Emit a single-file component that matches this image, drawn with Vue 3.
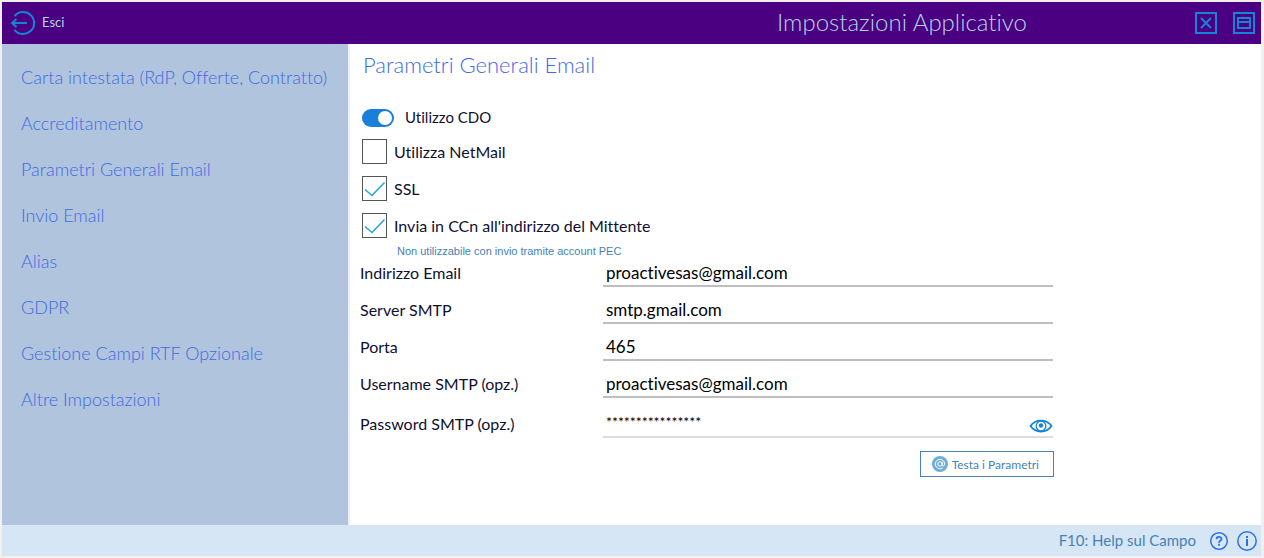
<script setup>
import { ref, reactive } from 'vue'

const menu = [
  'Carta intestata (RdP, Offerte, Contratto)',
  'Accreditamento',
  'Parametri Generali Email',
  'Invio Email',
  'Alias',
  'GDPR',
  'Gestione Campi RTF Opzionale',
  'Altre Impostazioni',
]

const useCdo = ref(true)

const options = reactive([
  { id: 'netmail', label: 'Utilizza NetMail', checked: false },
  { id: 'ssl', label: 'SSL', checked: true },
  { id: 'ccn', label: "Invia in CCn all'indirizzo del Mittente", checked: true },
])

const fields = reactive([
  { id: 'email', label: 'Indirizzo Email', value: 'proactivesas@gmail.com' },
  { id: 'server', label: 'Server SMTP', value: 'smtp.gmail.com' },
  { id: 'port', label: 'Porta', value: '465' },
  { id: 'username', label: 'Username SMTP (opz.)', value: 'proactivesas@gmail.com' },
])

const password = ref('****************')
</script>

<template>
  <div class="window">
    <header class="titlebar">
      <button class="exit" type="button">
        <svg width="26" height="26" viewBox="0 0 26 26" fill="none" stroke="#1583d8" stroke-width="2">
          <path d="M4.500 6.200A11 11 0 1 1 4.500 19.800" />
          <path d="M17 13H2M6.500 9L2 13l4.500 4" />
        </svg>
        <span>Esci</span>
      </button>
      <h1>Impostazioni Applicativo</h1>
      <div class="window-buttons">
        <button type="button" aria-label="Chiudi">
          <svg width="22" height="22" viewBox="0 0 22 22" fill="none" stroke="#1583d8" stroke-width="2">
            <path d="M1 1h20v20H1zM6 6l10 10M16 6L6 16" />
          </svg>
        </button>
        <button type="button" aria-label="Ripristina">
          <svg width="22" height="22" viewBox="0 0 22 22" fill="none" stroke="#1583d8" stroke-width="2">
            <path d="M1 1h20v20H1zM5 6h12v10H5zM5 10h12" />
          </svg>
        </button>
      </div>
    </header>

    <div class="body">
      <nav class="sidebar">
        <a v-for="item in menu" :key="item" href="#">{{ item }}</a>
      </nav>

      <main class="content">
        <h2>Parametri Generali Email</h2>

        <form class="form" @submit.prevent>
          <label class="switch-row">
            <input v-model="useCdo" class="switch" type="checkbox" role="switch" />
            <span>Utilizzo CDO</span>
          </label>

          <div class="options">
            <label v-for="option in options" :key="option.id" class="option">
              <span class="box">
                <input v-model="option.checked" type="checkbox" />
                <svg v-if="option.checked" width="25" height="25" viewBox="0 0 25 25" fill="none" stroke="#1fa5dc" stroke-width="1.500">
                  <path d="M3 13.500l7 6L22.500 6.500" />
                </svg>
              </span>
              <span>{{ option.label }}</span>
            </label>
          </div>
          <p class="note">Non utilizzabile con invio tramite account PEC</p>

          <div class="fields">
            <div v-for="field in fields" :key="field.id" class="field">
              <label :for="field.id">{{ field.label }}</label>
              <input :id="field.id" v-model="field.value" type="text" />
            </div>
            <div class="field secret">
              <label for="password">Password SMTP (opz.)</label>
              <div class="secret-box">
                <input id="password" v-model="password" type="text" autocomplete="off" />
                <button type="button" aria-label="Mostra password">
                  <svg width="24" height="14" viewBox="0 0 24 14" fill="none" stroke="#1583d8" stroke-width="1.800">
                    <path d="M1.500 7C6.500-.3 17.500-.3 22.500 7C17.500 14.300 6.500 14.300 1.500 7z" />
                    <circle cx="12" cy="7" r="4.800" stroke-width="1.300" />
                    <circle cx="12" cy="6.500" r="2.200" fill="#1583d8" stroke="none" />
                  </svg>
                </button>
              </div>
            </div>
          </div>

          <button class="test" type="button">
            <svg width="16" height="16" viewBox="0 0 16 16" fill="none">
              <circle cx="8" cy="8" r="8" fill="#6faed6" />
              <circle cx="8" cy="8" r="2.200" stroke="#fff" />
              <path d="M10.200 5.600v3.100c0 2 2.500 1.600 2.500-.7A4.700 4.700 0 1 0 10.700 11.900" stroke="#fff" />
            </svg>
            <span>Testa i Parametri</span>
          </button>
        </form>
      </main>
    </div>

    <footer class="statusbar">
      <span>F10: Help sul Campo</span>
      <button type="button" aria-label="Aiuto">
        <svg width="20" height="20" viewBox="0 0 20 20" fill="none" stroke="#2b70e8" stroke-width="2">
          <circle cx="10" cy="10" r="8.300" stroke-width="1.500" />
          <path d="M7.500 8.300c0-3.200 5-3.200 5-.2c0 1.700-2.500 1.800-2.500 3.600M10 12.800v2" stroke-width="1.800" />
        </svg>
      </button>
      <button type="button" aria-label="Informazioni">
        <svg width="20" height="20" viewBox="0 0 20 20" fill="none" stroke="#2b70e8" stroke-width="2">
          <circle cx="10" cy="10" r="9.200" stroke-width="1.500" />
          <path d="M10 8v7M10 5v2" />
        </svg>
      </button>
    </footer>
  </div>
</template>

<style>
body {
  margin: 0;
}
</style>

<style scoped>
.window {
  box-sizing: border-box;
  display: flex;
  flex-direction: column;
  min-height: 100vh;
  border: 2px solid #f0f0f0;
  border-right-width: 3px;
  background: #fff;
  color: #101030;
  font-family: "Century Gothic", Lato, sans-serif;
  font-size: 16px;
  font-weight: 400;
  font-variant-ligatures: none;
}

button {
  display: flex;
  align-items: center;
  padding: 0;
  border: 0;
  background: none;
  color: inherit;
  font: inherit;
  font-variant-ligatures: none;
  cursor: pointer;
}

svg {
  display: block;
  flex: none;
}

.titlebar {
  display: flex;
  align-items: center;
  height: 42px;
  padding: 0 6px 0 8px;
  background: #4b0082;
  color: #add8e6;
}

.exit {
  gap: 6px;
  font-size: 13px;
  line-height: 16px;
}

.exit span {
  padding-bottom: 2px;
}

.titlebar h1 {
  margin: 0 168px 0 auto;
  padding-bottom: 3px;
  font-size: 24px;
  font-weight: 300;
  line-height: 28px;
}

.window-buttons {
  display: flex;
  gap: 16px;
}

.body {
  display: flex;
  flex: 1;
}

.sidebar {
  box-sizing: border-box;
  flex: none;
  width: 348px;
  padding: 10px 0 0 19px;
  border-right: 2px solid #f0f0f0;
  background: #b0c4de;
}

.sidebar a {
  display: block;
  color: #4169e1;
  font-size: 18px;
  font-weight: 300;
  line-height: 46px;
  text-decoration: none;
  white-space: nowrap;
}

.content {
  flex: 1;
  padding: 6px 10px;
}

.content h2 {
  margin: 0 0 28px 3px;
  color: #4169e1;
  font-size: 22px;
  font-weight: 300;
  line-height: 30px;
}

.form {
  max-width: 694px;
}

.switch-row {
  display: flex;
  align-items: center;
  gap: 11px;
  height: 20px;
  margin-left: 2px;
}

.switch-row span {
  padding-bottom: 2px;
  font-size: 15px;
}

.switch {
  appearance: none;
  box-sizing: border-box;
  width: 32px;
  height: 18px;
  margin: 0;
  padding: 2px;
  border-radius: 9px;
  background: #8a8a8a;
}

.switch::before {
  content: "";
  display: block;
  width: 14px;
  height: 14px;
  border-radius: 50%;
  background: #fff;
}

.switch:checked {
  background: #1a7fd9;
}

.switch:checked::before {
  margin-left: auto;
}

.options {
  display: grid;
  gap: 12px;
  margin: 11px 0 0 2px;
}

.option {
  display: flex;
  align-items: center;
  gap: 7px;
}

.box {
  display: grid;
}

.box > * {
  grid-area: 1 / 1;
}

.box input {
  appearance: none;
  box-sizing: border-box;
  width: 25px;
  height: 25px;
  margin: 0;
  border: 1px solid #555;
  background: #fff;
}

.box svg {
  pointer-events: none;
}

.note {
  margin: 5px 0 3px 37px;
  color: #4682b4;
  font-family: "Liberation Sans", Arial, sans-serif;
  font-size: 11px;
  line-height: 16px;
}

.fields {
  display: grid;
  gap: 12px;
}

.field {
  display: grid;
  grid-template-columns: 243px 1fr;
  height: 25px;
  margin-right: 1px;
  line-height: 22px;
}

.field input {
  box-sizing: border-box;
  width: 100%;
  min-width: 0;
  height: 25px;
  padding: 0 3px 2px;
  border: 0;
  border-bottom: 2px solid #bebebe;
  outline: 0;
  background: none;
  color: #000;
  font: inherit;
  font-size: 17px;
  font-variant-ligatures: none;
}

.field.secret {
  height: 28px;
  line-height: 28px;
}

.secret-box {
  display: flex;
  align-items: center;
  border-bottom: 2px solid #dcdcdc;
}

.secret-box input {
  border: 0;
  font-size: 14px;
}

.secret-box button {
  padding-top: 5px;
}

.test {
  gap: 4px;
  height: 26px;
  margin: 13px 0 0 auto;
  padding: 0 14px 0 11px;
  border: 1px solid #4682b4;
  color: #4682b4;
  font-size: 12px;
}

.statusbar {
  display: flex;
  align-items: center;
  justify-content: flex-end;
  gap: 8px;
  height: 31px;
  padding-right: 4px;
  background: #d7e6f5;
  color: #4682b4;
  font-size: 15px;
}

.statusbar span {
  margin-right: 5px;
  padding-bottom: 2px;
}
</style>
